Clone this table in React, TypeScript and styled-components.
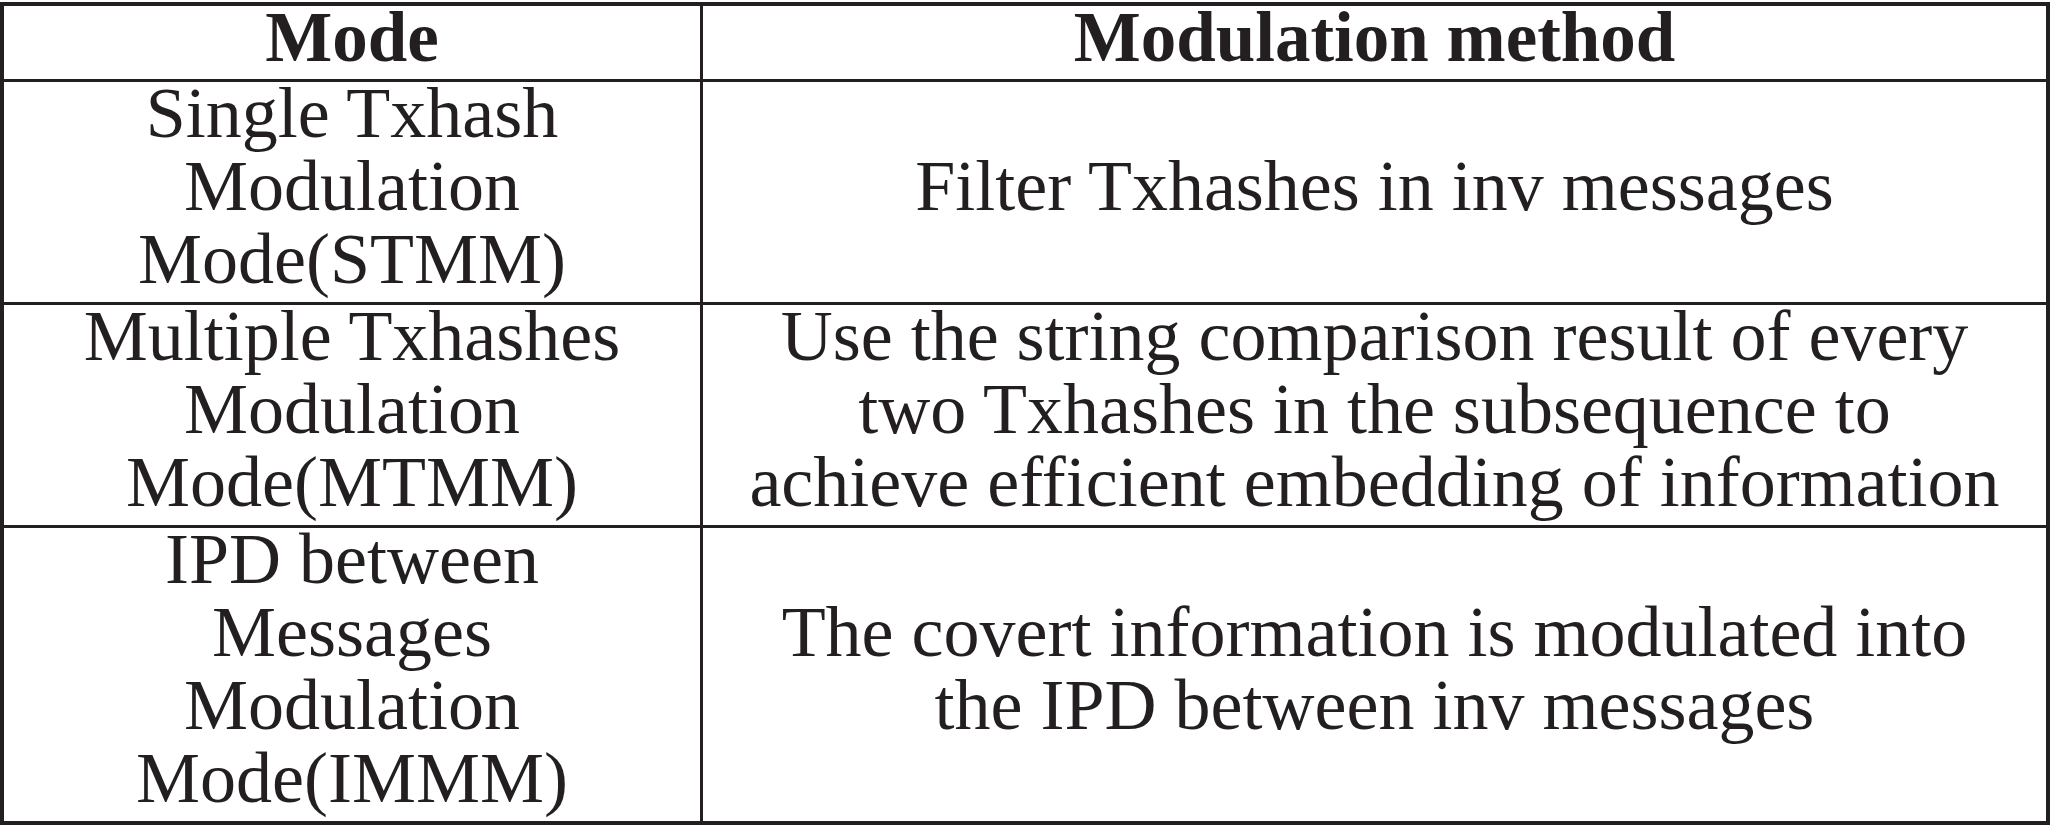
import React from "react";
import styled, { createGlobalStyle } from "styled-components";

const GlobalStyle = createGlobalStyle`
  html, body {
    margin: 0;
    padding: 0;
    background: #ffffff;
  }
  body {
    font-family: "Liberation Serif", "Times New Roman", serif;
    color: #231f20;
  }
`;

const Page = styled.div`
  padding-top: 2px;
  width: 2058px;
  height: 825px;
  box-sizing: border-box;
  background: #ffffff;
`;

const Table = styled.div`
  display: grid;
  grid-template-columns: 696px 1343px;
  grid-template-rows: 73px 220px 220px 293px;
  gap: 3px;
  width: 2050px;
  box-sizing: border-box;
  border: 4px solid #231f20;
  background: #231f20;
`;

const Cell = styled.div<{ $head?: boolean }>`
  background: #ffffff;
  display: flex;
  flex-direction: column;
  align-items: center;
  justify-content: center;
  box-sizing: border-box;
  padding-bottom: ${(p) => (p.$head ? 10 : 11)}px;
  text-align: center;
  font-size: ${(p) => (p.$head ? 71 : 72)}px;
  line-height: 73px;
  font-weight: ${(p) => (p.$head ? 700 : 400)};
  color: #231f20;
  white-space: nowrap;
`;

const Line = styled.span`
  display: block;
`;

type Row = { mode: string[]; method: string[] };

const rows: Row[] = [
  {
    mode: ["Single Txhash", "Modulation", "Mode(STMM)"],
    method: ["Filter Txhashes in inv messages"],
  },
  {
    mode: ["Multiple Txhashes", "Modulation", "Mode(MTMM)"],
    method: [
      "Use the string comparison result of every",
      "two Txhashes in the subsequence to",
      "achieve efficient embedding of information",
    ],
  },
  {
    mode: ["IPD between", "Messages", "Modulation", "Mode(IMMM)"],
    method: [
      "The covert information is modulated into",
      "the IPD between inv messages",
    ],
  },
];

const Lines: React.FC<{ lines: string[] }> = ({ lines }) => (
  <>
    {lines.map((l, i) => (
      <Line key={i}>{l}</Line>
    ))}
  </>
);

export default function App() {
  return (
    <>
      <GlobalStyle />
      <Page>
        <Table>
          <Cell $head>Mode</Cell>
          <Cell $head>Modulation method</Cell>
          {rows.map((r, i) => (
            <React.Fragment key={i}>
              <Cell>
                <Lines lines={r.mode} />
              </Cell>
              <Cell>
                <Lines lines={r.method} />
              </Cell>
            </React.Fragment>
          ))}
        </Table>
      </Page>
    </>
  );
}
